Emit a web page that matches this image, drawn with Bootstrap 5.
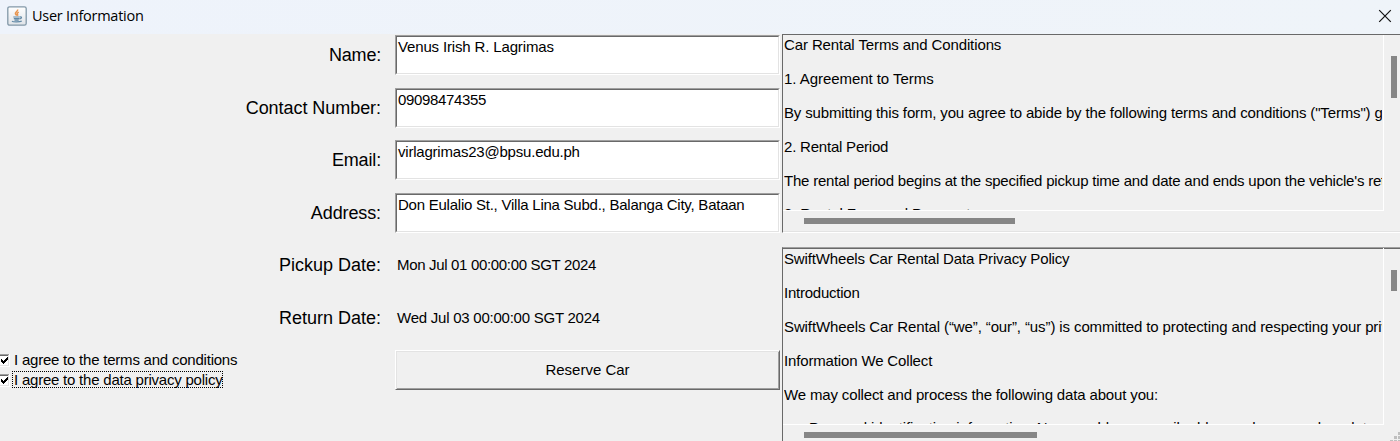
<!DOCTYPE html>
<html lang="en">
<head>
<meta charset="utf-8">
<meta name="viewport" content="width=device-width, initial-scale=1">
<title>User Information</title>
<link href="https://cdn.jsdelivr.net/npm/bootstrap@5.3.0/dist/css/bootstrap.min.css" rel="stylesheet">
<style>
body{width:1400px;height:441px;background:#f0f0f0;color:#000;font:15px/17px "Liberation Sans",Arial,sans-serif}
.titlebar{height:34px;background:linear-gradient(90deg,#eef3fb,#eff4f9);padding:0 8px 2px 7px;line-height:20px}
.titlebar .caption{margin-left:5px;font-family:"Open Sans","Noto Sans",sans-serif;font-size:14.5px;letter-spacing:-.26px}
.form-side{width:782px;padding-top:1px}
.form-line{height:52.5px}
.form-label-cell{width:395px;height:40px;padding-right:14px;font-size:18px;line-height:40px;text-align:right}
.t0{letter-spacing:-.05px}
.t1{letter-spacing:-.11px}
.t2{letter-spacing:-.15px}
.t3{letter-spacing:-.21px}
.t4{letter-spacing:-.24px}
.t5{letter-spacing:-.33px}
.entry{width:385px;height:40px;border:1px solid;border-color:#a0a0a0 #fff #fff #a0a0a0;padding:0;background:#fff}
.entry>div{height:38px;border:1px solid;border-color:#696969 #e3e3e3 #e3e3e3 #696969;padding:1px 0 0 1px}
.date-text{width:385px;padding-left:2px;line-height:40px}
.agree{height:20px}
.agree svg{flex:none}
.agree span{padding:0 1px 0 2px;margin-bottom:2px;letter-spacing:-.22px}
.agree .focused{outline:1px dotted #000;outline-offset:-1px}
.reserve{width:385px;height:40px;border-radius:0;border:1px solid;border-color:#fff #696969 #696969 #fff;box-shadow:inset 1px 1px #e3e3e3,inset -1px -1px #a0a0a0;padding:0;font-size:15px;line-height:38px;color:#000}
.doc{width:618px;border-left:1px solid #696969}
.doc-view{width:601px;overflow:hidden;white-space:pre;padding-left:1px;border-right:1px solid #fff;border-bottom:1px solid #fff}
.doc p{width:598px;margin:0 0 17px;height:17px;overflow-x:clip}
.doc p:last-child{margin-top:-18px;padding-top:17px;height:34px}
.doc p:nth-last-child(2){margin-bottom:17px}
.doc-terms{height:199px;border-top:1px solid #696969;border-bottom:1px solid #fff;box-shadow:inset 0 -1px #e3e3e3}
.doc-terms .doc-view{height:176px;padding-top:1px}
.doc-privacy{height:194px;margin-top:14px;border-top:1px solid #a0a0a0;box-shadow:inset 0 1px #696969;overflow:hidden}
.doc-privacy .doc-view{height:177px;padding-top:2px}
.thumb{background:#868686}
.thumb-v{width:6px;margin-left:7px}
.thumb-h{height:6px;margin:7px 0 0 21px}
.grip{right:0;bottom:0}
</style>
</head>
<body class="overflow-hidden position-relative">
<header class="titlebar d-flex align-items-center">
  <svg width="20" height="20" viewBox="0 0 20 20"><defs><linearGradient id="g" x2="0" y2="1"><stop stop-color="#fff"/><stop offset="1" stop-color="#dfe3e8"/></linearGradient></defs><rect x=".8" y=".8" width="18.4" height="18.4" rx="1.8" fill="url(#g)" stroke="#8298a8" stroke-width="1.3"/><path d="M10.600 3.500c.6 2-2.800 2.700-2.200 4.200.3.800 1.100 1.100 1.300 1.900M11.800 6.200c-1.600.8-2 1.500-1.300 2.200.4.500.2.900-.2 1.200" fill="none" stroke="#e8954f" stroke-width="1.500"/><path d="M6.300 11h6.500M6.800 12.700h5.500M13 11c2.200-.5 2 1.600-.6 2M7.500 14.100h4.200M5 15.300c1 .9 8 .9 9.800-.2" fill="none" stroke="#6289a6" stroke-width="1.200"/></svg>
  <span class="caption">User Information</span>
  <svg class="ms-auto" width="14" height="14" viewBox="0 0 14 14"><path d="M1.200 1.200l11.600 11.600M12.800 1.200L1.200 12.800" stroke="#111" stroke-width="1.2"/></svg>
</header>
<main class="d-flex">
  <section class="form-side">
    <div class="form-line d-flex"><label class="form-label-cell t3">Name:</label><div class="entry"><div class="t2">Venus Irish R. Lagrimas</div></div></div>
    <div class="form-line d-flex"><label class="form-label-cell t0">Contact Number:</label><div class="entry"><div class="t5">09098474355</div></div></div>
    <div class="form-line d-flex"><label class="form-label-cell t2">Email:</label><div class="entry"><div class="t3">virlagrimas23@bpsu.edu.ph</div></div></div>
    <div class="form-line d-flex"><label class="form-label-cell t1">Address:</label><div class="entry"><div class="t4">Don Eulalio St., Villa Lina Subd., Balanga City, Bataan</div></div></div>
    <div class="form-line d-flex"><label class="form-label-cell">Pickup Date:</label><div class="date-text t5">Mon Jul 01 00:00:00 SGT 2024</div></div>
    <div class="form-line d-flex"><label class="form-label-cell">Return Date:</label><div class="date-text t4">Wed Jul 03 00:00:00 SGT 2024</div></div>
    <div class="d-flex">
      <div class="form-agreements" style="width:395px">
        <div class="agree d-flex align-items-center"><svg width="12" height="13" viewBox="0 0 12 13" shape-rendering="crispEdges"><path fill="#fff" d="M0 0h10v13H0z"/><path fill="#a0a0a0" d="M0 0h9v1H0z"/><path fill="#696969" d="M0 1h8v1H0z"/><path fill="#e3e3e3" d="M0 11h9v1H0zM8 1h1v11H8z"/><path d="M7 3h1v3H7zM6 4h1v3H6zM5 5h1v3H5zM4 6h1v3H4zM3 7h1v3H3zM2 6h1v3H2zM1 5h1v3H1z"/></svg><span>I agree to the terms and conditions</span></div>
        <div class="agree d-flex align-items-center"><svg width="12" height="13" viewBox="0 0 12 13" shape-rendering="crispEdges"><path fill="#fff" d="M0 0h10v13H0z"/><path fill="#a0a0a0" d="M0 0h9v1H0z"/><path fill="#696969" d="M0 1h8v1H0z"/><path fill="#e3e3e3" d="M0 11h9v1H0zM8 1h1v11H8z"/><path d="M7 3h1v3H7zM6 4h1v3H6zM5 5h1v3H5zM4 6h1v3H4zM3 7h1v3H3zM2 6h1v3H2zM1 5h1v3H1z"/></svg><span class="focused">I agree to the data privacy policy</span></div>
      </div>
      <button class="btn reserve">Reserve Car</button>
    </div>
  </section>
  <section>
    <div class="doc doc-terms">
      <div class="d-flex"><div class="doc-view"><p class="t1">Car Rental Terms and Conditions</p><p class="t0">1. Agreement to Terms</p><p class="t2">By submitting this form, you agree to abide by the following terms and conditions ("Terms") governing</p><p class="t3">2. Rental Period</p><p class="t3">The rental period begins at the specified pickup time and date and ends upon the vehicle's return</p><p class="t2">3. Rental Fees and Payment</p></div><div class="thumb thumb-v" style="height:42px;margin-top:21px"></div></div>
      <div class="thumb thumb-h" style="width:211px"></div>
    </div>
    <div class="doc doc-privacy">
      <div class="d-flex"><div class="doc-view"><p class="t2">SwiftWheels Car Rental Data Privacy Policy</p><p class="t4">Introduction</p><p class="t1">SwiftWheels Car Rental (“we”, “our”, “us”) is committed to protecting and respecting your privacy.</p><p class="t2">Information We Collect</p><p class="t2">We may collect and process the following data about you:</p><p class="t2">    - Personal identification information: Name, address, email address, phone number, date of birth</p></div><div class="thumb thumb-v" style="height:21px;margin-top:22px"></div></div>
      <div class="thumb thumb-h" style="width:233px"></div>
    </div>
  </section>
</main>
<svg class="grip position-absolute" width="10" height="9" viewBox="0 0 10 9" shape-rendering="crispEdges"><path fill="#bfbfbf" d="M8 0h2v3H8zM4 4h3v3H4zM8 4h2v3H8zM0 8h3v1H0zM4 8h3v1H4zM8 8h2v1H8z"/></svg>
<script src="https://cdn.jsdelivr.net/npm/bootstrap@5.3.0/dist/js/bootstrap.bundle.min.js"></script>
</body>
</html>
